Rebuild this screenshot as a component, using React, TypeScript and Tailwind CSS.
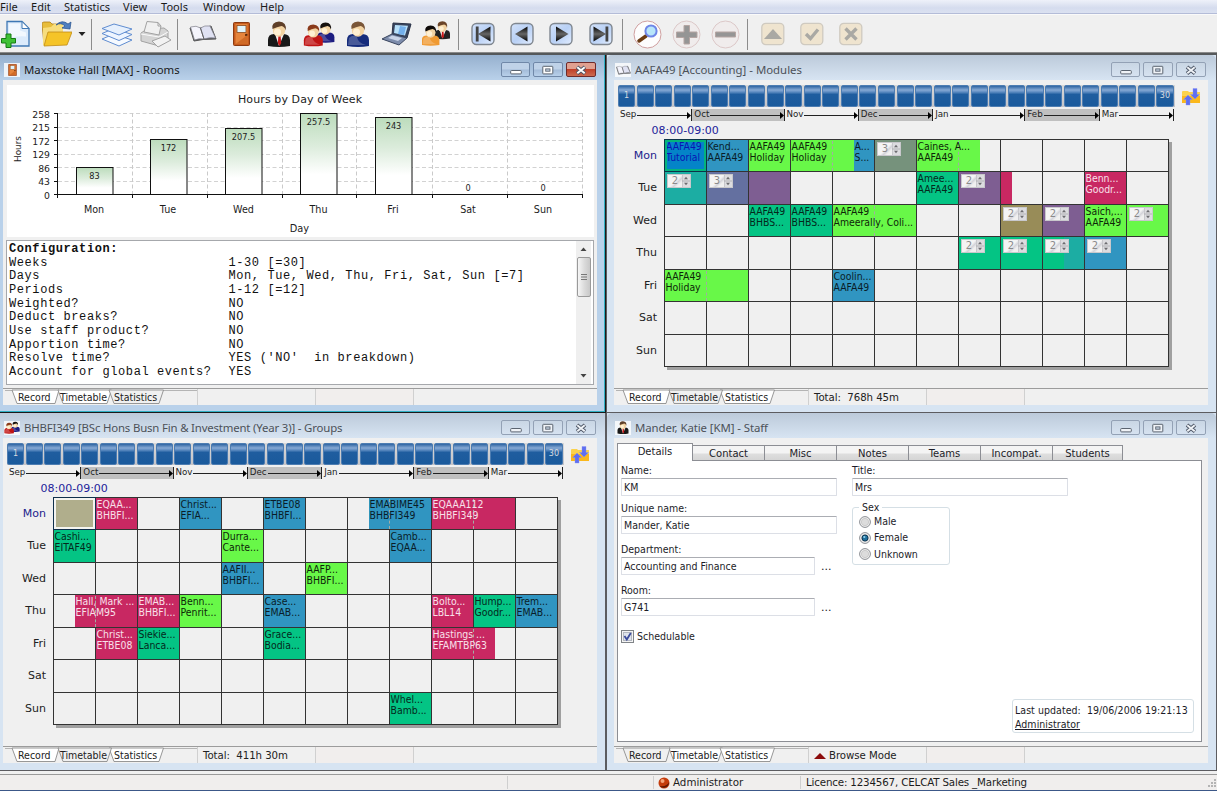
import type { ReactNode } from "react";

const COND = "font-['DejaVu_Sans_Condensed','DejaVu_Sans',sans-serif]";
const WIDE = "font-['DejaVu_Sans',sans-serif]";
const SEGOE = "font-['Noto_Sans','Open_Sans',sans-serif]";

/* ---------- icons ---------- */

function Person({ hair, body, tie, x = 0, y = 0, s = 1 }: { hair: string; body: string; tie?: boolean; x?: number; y?: number; s?: number }) {
  return (
    <g transform={`translate(${x} ${y}) scale(${s})`}>
      <path d="M1 25V19q0-6 6-6h9q7 0 7 6v6q-11 2-22 0z" fill={body} />
      {tie && <path d="M8 13l4 12 5-12z" fill="#f4f4f4" />}
      {tie && <path d="M11.500 14h2l.7 8-1.600 3-1.800-3z" fill="#c81818" />}
      {!tie && <path d="M3 17q4-4 8-1 1 6 9 8H2z" fill="#fff" opacity=".22" />}
      <ellipse cx="12" cy="9" rx="6.200" ry="6.800" fill="#f3d3a2" />
      <ellipse cx="10.500" cy="11" rx="3.500" ry="3.500" fill="#fff0d2" />
      <path d="M5.500 8Q4 1 12 .5q8 .5 6.700 9-1-4-4.200-4.500Q10 6 5.500 8z" fill={hair} />
    </g>
  );
}

function DoorShape() {
  return (
    <g>
      <rect x=".5" y=".5" width="16" height="23" rx="1" fill="#c65a1c" stroke="#8c3a10" />
      <rect x="2.500" y="2" width="12" height="20" fill="#e5843c" />
      <rect x="4" y="3.500" width="9" height="7" fill="#dff3fb" stroke="#8c4a1c" strokeWidth=".8" />
      <circle cx="13.300" cy="13" r="1.300" fill="#5a2808" />
      <path d="M2.500 22l12-9v9z" fill="#d06a26" />
    </g>
  );
}

function BookShape() {
  return (
    <g strokeLinejoin="round">
      <path d="M1 6l4 13 9-1.500 13-.5-5-13-9 2z" fill="#5e6268" stroke="#555" />
      <path d="M1.500 5q6-2 10 1l3.500 11q-5-1-9.500 1z" fill="#f4f4fc" stroke="#7c7c86" strokeWidth=".7" />
      <path d="M11.500 6q4-3 9.500-2l5.500 12q-6-1-11.500 1z" fill="#dfe1f2" stroke="#7c7c86" strokeWidth=".7" />
      <path d="M11.500 6l3.500 11" stroke="#555" strokeWidth=".8" />
    </g>
  );
}

function Groups() {
  return (
    <g>
      <Person hair="#17120f" body="#1c1c80" x={13} y={1} s={0.8} />
      <Person hair="#8a3a1a" body="#c01414" x={0} y={3} s={0.86} />
    </g>
  );
}

function NavButton({ d, bar, className }: { d: string; bar?: number; className: string }) {
  return (
    <svg className={`${className} h-6 w-6`} viewBox="0 0 24 24">
      <defs>
        <linearGradient id="nav" x1="0" y1="0" x2="1" y2="1">
          <stop offset="0" stopColor="#d3e2fa" />
          <stop offset=".5" stopColor="#b8d0f5" />
          <stop offset="1" stopColor="#e2edff" />
        </linearGradient>
        <linearGradient id="arrow" x1="0" y1="0" x2="0" y2="1">
          <stop offset="0" stopColor="#000" />
          <stop offset=".5" stopColor="#666" />
          <stop offset="1" stopColor="#000" />
        </linearGradient>
      </defs>
      <rect x="1" y="1.500" width="22" height="21" rx="4.500" fill="url(#nav)" stroke="#7f868f" strokeWidth="1.400" />
      <path d={d} fill="url(#arrow)" />
      {bar !== undefined && <rect x={bar} y="4.500" width="2.800" height="15" fill="#444" />}
    </svg>
  );
}

function EditButton({ children, className }: { children: ReactNode; className: string }) {
  return (
    <svg className={`${className} h-6 w-6`} viewBox="0 0 24 24">
      <rect x=".8" y="1.300" width="22" height="21.400" rx="4" fill="#efe4cf" stroke="#cfcac0" strokeWidth="1.300" />
      {children}
    </svg>
  );
}

function Sep({ className }: { className: string }) {
  return <div className={`${className} h-[31px] w-px bg-[#8c8c8c]`} />;
}

function Toolbar() {
  return (
    <div className="flex h-[38px] w-full items-center border-t border-[#fafafa] bg-[#f0f0f0] pt-px">
      <svg className="h-7 w-[30px] shrink-0" viewBox="0 0 30 28">
        <path d="M7 1.500h15l7 7V26H7z" fill="#dcebfb" stroke="#3f78b4" strokeWidth="1.300" />
        <path d="M9 3.500h11v7l6 2v4q-9-1-17 2z" fill="#f2f8fe" />
        <path d="M22 1.500v7h7z" fill="#fff" stroke="#3f78b4" />
        <path d="M6 14h5v4.500h4.500v4.500H11v4.500H6V23H1.500v-4.500H6z" fill="#3fc135" stroke="#167a14" />
      </svg>
      <svg className="ml-3 h-7 w-[30px]" viewBox="0 0 30 28">
        <path d="M0 4q0-2 2-2h6l2 2h8v6L2 25z" fill="#e8bd3a" stroke="#b07f18" strokeWidth=".8" />
        <path d="M1 25V8l8-1 3-3h9v10L6 26z" fill="#f7dd7c" />
        <path d="M6 12h24l-5 13-23 1z" fill="#f5c428" stroke="#c08c14" strokeWidth=".8" />
        <path d="M14 5q6-6 12-1l3-2-1 7-8-1 3-2q-4-4-9-1z" fill="#4f7fc0" stroke="#234f8c" strokeWidth=".7" />
      </svg>
      <svg className="ml-[6px] h-2 w-2" viewBox="0 0 8 8"><path d="M.5 2h7L4 6z" fill="#222" /></svg>
      <Sep className="ml-[5px]" />
      <svg className="ml-[10px] h-7 w-[30px]" viewBox="0 0 30 28" strokeLinejoin="round" stroke="#5f8cd0">
        <path d="M0 19l12-5 18 6-13 6z" fill="#f6faff" />
        <path d="M0 13.500l12-5 18 6-13 6z" fill="#eef5ff" />
        <path d="M0 8.500L12 4l18 5-13 6z" fill="#e6f0fd" />
      </svg>
      <svg className="ml-2 h-7 w-8" viewBox="0 0 32 28" stroke="#a2a2a2" strokeLinejoin="round">
        <path d="M1 13l6-4 17-1 4 3v9l-9 6-18-5z" fill="#d4d4d4" />
        <path d="M4 12L7 1.500l11 1L21 6l-2 9z" fill="#f0f0f0" />
        <path d="M18 2.500V6h3" fill="none" />
        <path d="M1 14l18 3 9-5" fill="none" stroke="#fafafa" />
        <path d="M12 21l13-5 6 4-13 7z" fill="#f2f2f2" />
      </svg>
      <Sep className="ml-[5px]" />
      <svg className="ml-[11px] h-6 w-7" viewBox="0 0 28 24"><BookShape /></svg>
      <svg className="ml-4 h-6 w-[17px]" viewBox="0 0 17 24"><DoorShape /></svg>
      <svg className="ml-[17px] h-[26px] w-6" viewBox="0 0 24 26"><Person hair="#5f3f28" body="#181818" tie /></svg>
      <svg className="ml-3 h-[26px] w-8" viewBox="0 0 32 26"><Groups /></svg>
      <svg className="ml-[11px] h-[26px] w-6" viewBox="0 0 24 26"><Person hair="#7a5638" body="#162c7c" /></svg>
      <svg className="ml-[11px] h-[26px] w-[31px]" viewBox="0 0 31 26" strokeLinejoin="round">
        <path d="M12 2l18 1-4 14-15-3z" fill="#39455e" stroke="#2a3348" />
        <path d="M14 4l13 .8-3 9.700L13 12z" fill="#b7e0fa" />
        <path d="M19 5l-2 8 6 1 2-8z" fill="#74b0ec" />
        <path d="M11 13l15 4-8 7L1 18z" fill="#7d8cab" stroke="#39455e" />
        <path d="M11 14.500l10 2.500-4 3-10-3z" fill="#c9d4e8" />
      </svg>
      <svg className="ml-[10px] h-[26px] w-7" viewBox="0 0 28 26">
        <Person hair="#6a4428" body="#222" tie x={12} y={0} s={0.7} />
        <Person hair="#0f0b09" body="#f09a32" x={-1} y={4} s={0.8} />
      </svg>
      <Sep className="ml-2" />
      <NavButton className="ml-3" d="M19.500 4.500v15L7 12z" bar={4.8} />
      <NavButton className="ml-[15px]" d="M17.500 4.500v15L5 12z" />
      <NavButton className="ml-[15px]" d="M7 4.500v15L19.500 12z" />
      <NavButton className="ml-4" d="M4.500 4.500v15L17 12z" bar={16.5} />
      <Sep className="ml-[9px]" />
      <svg className="ml-[10px] h-[29px] w-[29px]" viewBox="0 0 29 29">
        <circle cx="14.500" cy="14.500" r="13.500" fill="#fdfdfd" stroke="#d0a0a0" />
        <path d="M6 21l7-5" stroke="#6b3c14" strokeWidth="3.500" strokeLinecap="round" />
        <circle cx="18" cy="11" r="5.600" fill="#b8e6fa" stroke="#6f86e8" strokeWidth="2" />
      </svg>
      <svg className="ml-[10px] h-[29px] w-[29px]" viewBox="0 0 29 29">
        <circle cx="14.500" cy="14.500" r="13.500" fill="#f0ecec" stroke="#dcc8c8" />
        <path d="M12 5.500h5.500V12H25v5.500h-7.500V24H12v-6.500H4.500V12H12z" fill="#959595" stroke="#b5a5a2" />
      </svg>
      <svg className="ml-[10px] h-[29px] w-[29px]" viewBox="0 0 29 29">
        <circle cx="14.500" cy="14.500" r="13.500" fill="#f0ecec" stroke="#dcc8c8" />
        <path d="M4.500 12h20v5h-20z" fill="#959595" stroke="#b5a5a2" />
      </svg>
      <Sep className="ml-[7px]" />
      <EditButton className="ml-[13px]"><path d="M3 17l9-10 9 10z" fill="#aaa9a4" /></EditButton>
      <EditButton className="ml-[15px]"><path d="M6 12l4.500 4.500L18 7.500" fill="none" stroke="#aaa9a4" strokeWidth="3.400" /></EditButton>
      <EditButton className="ml-[15px]"><path d="M6.500 6.500l11 11m0-11l-11 11" fill="none" stroke="#aaa9a4" strokeWidth="3.400" /></EditButton>
    </div>
  );
}

/* ---------- window frame ---------- */

function CaptionButtons({ active }: { active?: boolean }) {
  const plain = active
    ? "border-[#7088a8] bg-[linear-gradient(#bfd2e8_0_48%,#a3bbd8_52%,#b8d0ea)]"
    : "border-[#93a1b5] bg-[linear-gradient(#c9d6e4,#d6e2f0)]";
  const close = active ? "border-[#6e2a2a] bg-[linear-gradient(#e0a090_0_45%,#c0402a_50%,#cc6a50)]" : plain;
  const ink = active ? "#fff" : "#f0f3f7";
  return (
    <div className="flex gap-[3px]">
      <div className={`flex h-[15px] w-[29px] items-center justify-center rounded-[2px] border ${plain}`}>
        <svg className="h-3 w-3" viewBox="0 0 12 12"><rect x=".7" y="6.500" width="10.600" height="3.400" rx=".8" fill={ink} stroke="#5b6470" /></svg>
      </div>
      <div className={`flex h-[15px] w-[30px] items-center justify-center rounded-[2px] border ${plain}`}>
        <svg className="h-3 w-3" viewBox="0 0 12 12"><rect x=".8" y="2.300" width="10" height="7.600" rx=".6" fill={ink} stroke="#5b6470" /><rect x="3.700" y="4.900" width="4.300" height="2.300" fill="#c2cfdf" stroke="#5b6470" strokeWidth=".9" /></svg>
      </div>
      <div className={`flex h-[15px] w-[30px] items-center justify-center rounded-[2px] border ${close}`}>
        <svg className="h-3 w-3" viewBox="0 0 12 12"><path d="M2 3l8 6.400m0-6.400l-8 6.400" stroke="#4d5666" strokeWidth="3.800" /><path d="M2.300 3.200l7.400 6m0-6l-7.400 6" stroke={ink} strokeWidth="1.900" /></svg>
      </div>
    </div>
  );
}

const tabShapes = [
  "M9 1L14 14.500H52L56 1Z",
  "M55 1L60 14.500H104L108.500 1Z",
  "M106 1L111 14.500H156L160.500 1Z",
];

function BottomBar({ activeTab, children }: { activeTab: number; children?: ReactNode }) {
  return (
    <div className="flex h-[17px] border-t border-[#9c9c9c] bg-[#f0f0f0]">
      <div className="grid w-[194px]">
        <svg className="col-start-1 row-start-1 h-4 w-[194px]" viewBox="0 0 194 16">
          <path d="M2 1.500H194" stroke="#b4b4b4" />
          {tabShapes.map((d, i) => (i === activeTab ? null : <path key={i} d={d} fill="#fff" stroke="#8c8c8c" strokeWidth=".9" />))}
          <path d={tabShapes[activeTab]} fill="#f0f0f0" stroke="#8c8c8c" strokeWidth=".9" />
        </svg>
        <div className={`${COND} col-start-1 row-start-1 flex pt-px pl-[15px] text-[10.5px] leading-[15px] text-[#222]`}>
          <span className="w-[42px]">Record</span>
          <span className="w-[54px]">Timetable</span>
          <span>Statistics</span>
        </div>
      </div>
      <div className={`${WIDE} flex w-[118px] items-center border-l border-[#d0d0d0] pt-px pl-[5px] text-[10.200px] tracking-[-0.05px] whitespace-pre text-[#222]`}>{children}</div>
      <div className="w-[98px] border-l border-[#d0d0d0] bg-[#f1eeed]" />
      <div className="flex-1 border-l border-[#d0d0d0]" />
    </div>
  );
}

function Win({ title, icon, active, side, activeTab, status, tracking = "", children }: {
  title: string; icon: ReactNode; active?: boolean; side: "left" | "right"; activeTab: number; status?: ReactNode; tracking?: string; children: ReactNode;
}) {
  const frame = active ? "bg-[#b9d1ea] border-[#1a1a1a] shadow-[inset_-1px_0_#2fb0c4]" : "bg-[#d7e4f2] border-[#5c5c60]";
  const bar = active ? "mr-px bg-[linear-gradient(#96b0ce,#b9d1ea)]" : "bg-[linear-gradient(#bccada,#d7e4f2)]";
  return (
    <section className={`flex h-[358px] min-w-0 flex-col border-r border-b ${frame} ${side === "left" ? "" : "border-l"}`}>
      <header className={`flex h-[25px] shrink-0 items-center pt-[4px] ${bar} ${side === "left" ? (active ? "pr-2 pl-1" : "pr-[9px] pl-1") : "rounded-t-[5px] pr-[10px] pl-2"}`}>
        <span className="flex h-[14px] w-4 items-center justify-center bg-white/80">{icon}</span>
        <h2 className={`${SEGOE} ml-1 flex-1 text-[11.4px] leading-4 ${tracking} ${active ? "text-[#1a1a1a]" : "text-[#4c5158]"}`}>{title}</h2>
        <CaptionButtons active={active} />
      </header>
      <div className={`flex min-h-0 flex-1 flex-col ${side === "left" ? "mr-2 ml-[3px]" : "mr-2 ml-[7px]"}`}>
        <div className="flex min-h-0 flex-1 flex-col bg-[#f0f0f0]">{children}</div>
        <BottomBar activeTab={activeTab}>{status}</BottomBar>
      </div>
      <div className={`h-[7px] shrink-0 ${active ? "border-b border-[#2fb0c4]" : ""}`} />
    </section>
  );
}

/* ---------- statistics window ---------- */

const bars = [
  { day: "Mon", value: "83", x: 76.5, top: 167.5, cx: 94 },
  { day: "Tue", value: "172", x: 150.5, top: 139.5, cx: 168 },
  { day: "Wed", value: "207.5", x: 225.5, top: 128.5, cx: 243.5 },
  { day: "Thu", value: "257.5", x: 300.5, top: 113.5, cx: 318.5 },
  { day: "Fri", value: "243", x: 375.5, top: 117.5, cx: 393 },
  { day: "Sat", value: "0", x: 450.5, top: 194.5, cx: 468 },
  { day: "Sun", value: "0", x: 525.5, top: 194.5, cx: 543 },
];
const scale = [258, 215, 172, 129, 86, 43, 0];
const ticks = [57.5, 132.5, 207.5, 282.5, 356.5, 432.5, 507.5, 582.5];

function HoursChart() {
  return (
    <svg className={`${WIDE} ml-1 block h-[152px] w-[587px] bg-white`} viewBox="7 85 587 152" fill="#1c1c1c">
      <defs>
        <linearGradient id="bar" x1="0" y1="0" x2="0" y2="1">
          <stop offset="0" stopColor="#bcdcbc" />
          <stop offset=".4" stopColor="#dcecdc" />
          <stop offset=".75" stopColor="#fff" />
        </linearGradient>
      </defs>
      <text x="238" y="102.500" fontSize="11" textLength="124">Hours by Day of Week</text>
      {scale.map((v, i) => {
        const y = 113.5 + i * 13.5;
        return (
          <g key={v}>
            {v > 0 && <path d={`M58 ${Math.round(y - 0.5) + 0.5}H582`} stroke="#d2d2d2" strokeDasharray="4 2.500" />}
            <path d={`M54 ${Math.round(y - 0.5) + 0.5}H58`} stroke="#111" />
            <text x="50" y={y + 4} fontSize="9.300" textAnchor="end">{v}</text>
          </g>
        );
      })}
      {ticks.map((x, i) => (
        <g key={x}>
          {i > 0 && <path d={`M${x} 113V194`} stroke="#cacaca" strokeDasharray="4 2.500" />}
          <path d={`M${x} 194V198`} stroke="#111" />
        </g>
      ))}
      {bars.map((b) => (
        <g key={b.day}>
          {b.value !== "0" && <rect x={b.x} y={b.top} width="36.500" height={194.5 - b.top} fill="url(#bar)" stroke="#111" />}
          <text x={b.value === "0" ? b.cx : b.x + 18} y={b.value === "0" ? 191 : b.top + 11} fontSize="8.200" textAnchor="middle">{b.value}</text>
          <text x={b.cx} y="213" fontSize="9.600" textAnchor="middle">{b.day}</text>
        </g>
      ))}
      <path d="M57.500 113V194.500H583" fill="none" stroke="#111" />
      <text x="299.500" y="232" fontSize="9.800" textAnchor="middle">Day</text>
      <text transform="translate(21 149) rotate(-90)" fontSize="8.800" textAnchor="middle">Hours</text>
    </svg>
  );
}

const config: [string, string][] = [
  ["Weeks", "1-30 [=30]"],
  ["Days", "Mon, Tue, Wed, Thu, Fri, Sat, Sun [=7]"],
  ["Periods", "1-12 [=12]"],
  ["Weighted?", "NO"],
  ["Deduct breaks?", "NO"],
  ["Use staff product?", "NO"],
  ["Apportion time?", "NO"],
  ["Resolve time?", "YES ('NO'  in breakdown)"],
  ["Account for global events?", "YES"],
];

function Report() {
  return (
    <div className="mt-[3px] ml-[3px] flex h-[145px] w-[588px] border border-[#a6a8ac] bg-white">
      <div className="flex-1 pt-[2px] pl-[2px] font-['Liberation_Mono',monospace] text-[12px] leading-[13.65px] tracking-[0.59px] text-[#111]">
        <div className="font-bold">Configuration:</div>
        {config.map(([k, v]) => (
          <div key={k} className="flex whitespace-pre"><span className="w-[219.5px]">{k}</span><span>{v}</span></div>
        ))}
      </div>
      <div className="mr-[2px] flex w-[15px] flex-col items-center bg-[#efefef]">
        <svg className="h-4 w-[15px]" viewBox="0 0 15 16"><path d="M4.500 10h6l-3-3.500z" fill="#444" /></svg>
        <div className="flex h-[40px] w-[14px] items-center justify-center rounded-[2px] border border-[#9a9a9a] bg-[linear-gradient(90deg,#f6f6f6,#dcdcdc_50%,#c8c8c8)]">
          <svg className="h-2 w-[6px]" viewBox="0 0 6 8"><path d="M0 1.500h6M0 4h6M0 6.500h6" stroke="#777" /></svg>
        </div>
        <div className="flex-1" />
        <svg className="h-4 w-[15px]" viewBox="0 0 15 16"><path d="M4.500 6h6l-3 3.500z" fill="#444" /></svg>
      </div>
    </div>
  );
}

/* ---------- timetable windows ---------- */

const colours = {
  blue: "bg-[#3095c1] text-[#0a1c28]",
  green: "bg-[#68f848] text-[#0e2608]",
  emerald: "bg-[#04c484] text-[#04281c]",
  pink: "bg-[#c82862] text-[#f8e0ea]",
  teal: "bg-[#1cada3]",
  slate: "bg-[#6470a0]",
  purple: "bg-[#7e5e92]",
  sage: "bg-[#76927c]",
  olive: "bg-[#988c58]",
  split: "bg-[linear-gradient(90deg,#04c484_50%,#1cada3_50%)]",
  picked: "bg-[#0484c8] text-[#0a14b4] border-2 border-[#04b47c] outline outline-[1.5px] outline-[#0c3348]",
  empty: "bg-[#b0ae8c] border-2 border-[#f4f4f0] outline outline-[1.5px] outline-[#10304c]",
};
type Colour = keyof typeof colours;
/* row, start and end in quarter-hours, colour, text lines, clash count, hour mark */
type Slot = { r: number; a: number; b: number; c: Colour; t?: [string, string]; n?: number; dash?: number };

const moduleSlots: Slot[] = [
  { r: 0, a: 4, b: 8, c: "blue", t: ["Kend...", "AAFA49"] },
  { r: 0, a: 8, b: 12, c: "green", t: ["AAFA49", "Holiday"] },
  { r: 0, a: 12, b: 18, c: "green", t: ["AAFA49", "Holiday"], dash: 16 },
  { r: 0, a: 18, b: 20, c: "blue", t: ["A...", "S..."] },
  { r: 0, a: 20, b: 24, c: "sage", n: 3 },
  { r: 0, a: 24, b: 30, c: "green", t: ["Caines, A...", "AAFA49"], dash: 28 },
  { r: 1, a: 0, b: 4, c: "teal", n: 2 },
  { r: 1, a: 4, b: 8, c: "slate", n: 3 },
  { r: 1, a: 8, b: 12, c: "purple" },
  { r: 1, a: 24, b: 28, c: "emerald", t: ["Amee...", "AAFA49"] },
  { r: 1, a: 28, b: 32, c: "purple", n: 2 },
  { r: 1, a: 32, b: 33, c: "pink" },
  { r: 1, a: 40, b: 44, c: "pink", t: ["Benn...", "Goodr..."] },
  { r: 2, a: 8, b: 12, c: "emerald", t: ["AAFA49", "BHBS..."] },
  { r: 2, a: 12, b: 16, c: "emerald", t: ["AAFA49", "BHBS..."] },
  { r: 2, a: 16, b: 24, c: "green", t: ["AAFA49", "Ameerally, Coli..."], dash: 20 },
  { r: 2, a: 32, b: 36, c: "olive", n: 2 },
  { r: 2, a: 36, b: 40, c: "purple", n: 2 },
  { r: 2, a: 40, b: 44, c: "green", t: ["Saich,...", "AAFA49"] },
  { r: 2, a: 44, b: 48, c: "green", n: 2 },
  { r: 3, a: 28, b: 32, c: "emerald", n: 2 },
  { r: 3, a: 32, b: 36, c: "emerald", n: 2 },
  { r: 3, a: 36, b: 40, c: "split", n: 2 },
  { r: 3, a: 40, b: 44, c: "blue", n: 2 },
  { r: 4, a: 0, b: 8, c: "green", t: ["AAFA49", "Holiday"], dash: 4 },
  { r: 4, a: 16, b: 20, c: "blue", t: ["Coolin...", "AAFA49"] },
  { r: 0, a: 0, b: 4, c: "picked", t: ["AAFA49", "Tutorial"] },
];

const groupSlots: Slot[] = [
  { r: 0, a: 4, b: 8, c: "pink", t: ["EQAA...", "BHBFI..."] },
  { r: 0, a: 12, b: 16, c: "blue", t: ["Christ...", "EFIA..."] },
  { r: 0, a: 20, b: 24, c: "blue", t: ["ETBE08", "BHBFI..."] },
  { r: 0, a: 30, b: 36, c: "blue", t: ["EMABIME45", "BHBFI349"], dash: 32 },
  { r: 0, a: 36, b: 44, c: "pink", t: ["EQAAA112", "BHBFI349"], dash: 40 },
  { r: 1, a: 0, b: 4, c: "emerald", t: ["Cashi...", "EITAF49"] },
  { r: 1, a: 16, b: 20, c: "green", t: ["Durra...", "Cante..."] },
  { r: 1, a: 32, b: 36, c: "blue", t: ["Camb...", "EQAA..."] },
  { r: 2, a: 16, b: 20, c: "blue", t: ["AAFII...", "BHBFI..."] },
  { r: 2, a: 24, b: 28, c: "green", t: ["AAFP...", "BHBFI..."] },
  { r: 3, a: 2, b: 8, c: "pink", t: ["Hall, Mark ...", "EFIAM95"], dash: 4 },
  { r: 3, a: 8, b: 12, c: "pink", t: ["EMAB...", "BHBFI..."] },
  { r: 3, a: 12, b: 16, c: "green", t: ["Benn...", "Penrit..."] },
  { r: 3, a: 20, b: 24, c: "blue", t: ["Case...", "EMAB..."] },
  { r: 3, a: 36, b: 40, c: "pink", t: ["Bolto...", "LBL14"] },
  { r: 3, a: 40, b: 44, c: "emerald", t: ["Hump...", "Goodr..."] },
  { r: 3, a: 44, b: 48, c: "blue", t: ["Trem...", "EMAB..."] },
  { r: 4, a: 4, b: 8, c: "pink", t: ["Christ...", "ETBE08"] },
  { r: 4, a: 8, b: 12, c: "emerald", t: ["Siekie...", "Lanca..."] },
  { r: 4, a: 20, b: 24, c: "emerald", t: ["Grace...", "Bodia..."] },
  { r: 4, a: 36, b: 42, c: "pink", t: ["Hastings ...", "EFAMTBP63"], dash: 40 },
  { r: 6, a: 32, b: 36, c: "emerald", t: ["Whel...", "Bamb..."] },
  { r: 0, a: 0, b: 4, c: "empty" },
];

const months = [
  ["Sep", 4], ["Oct", 5], ["Nov", 4], ["Dec", 4], ["Jan", 5], ["Feb", 4], ["Mar", 4],
] as const;
const days = ["Mon", "Tue", "Wed", "Thu", "Fri", "Sat", "Sun"];

function Spinner({ n }: { n: number }) {
  return (
    <div className="mt-[2px] ml-[2px] flex h-[14px] w-6 border border-[#c8c8cc] bg-[linear-gradient(135deg,#f4f4f4_40%,#d4d4da_50%,#f0f0f0_60%)]">
      <span className={`${WIDE} w-[14px] text-center text-[10px] leading-3 text-[#8a8a8a]`}>{n}</span>
      <svg className="h-3 w-2 bg-[#dcdcdf]" viewBox="0 0 8 12"><path d="M0 0v12M0 6h8" stroke="#a8a8ac" strokeWidth=".8" /><path d="M2 4.300h4L4 1.800zM2 7.700h4L4 10.200z" fill="#6c6c70" /></svg>
    </div>
  );
}

function Timetable({ slots }: { slots: Slot[] }) {
  return (
    <div className="pt-[5px] pl-1">
      <div className="flex h-[22px]">
        <div className="grid w-[557px] grid-cols-[repeat(30,minmax(0,1fr))] bg-[linear-gradient(#d8d8d8,#c4c4c8)]">
          {Array.from({ length: 30 }, (_, i) => (
            <div key={i} className={`${WIDE} mr-[1.5px] rounded-[2px] border border-[#4d7db2] bg-[linear-gradient(#2e64a2_0,#86a9d4_20%,#5e8cc2_30%,#1f5d9f_42%,#1a5a9c)] text-center text-[8px] leading-[20px] text-[#d8dce0]`}>
              {i === 0 ? "1" : i === 29 ? "30" : ""}
            </div>
          ))}
        </div>
        <svg className="mt-[3px] ml-[7px] h-[18px] w-[18px]" viewBox="0 0 18 18">
          <path d="M0 4q0-1 1-1h5l1 1h11v10H0z" fill="#fbd24c" />
          <path d="M0 8h18v7H0z" fill="#fbb81c" />
          <path d="M6 7l4.500 4.500H8V17H4v-5.500H1.500zM13 11l4.500-4.500H15V.5h-4v6H8.500z" fill="#5f6ff0" stroke="#8b94f4" strokeWidth=".4" />
        </svg>
      </div>
      <div className={`${WIDE} mt-[2px] flex h-[12px] w-[556px] text-[8.7px] leading-[11px] text-[#222]`}>
        {months.map(([m, weeks], i) => (
          <div key={m} style={{ flexGrow: weeks, flexBasis: 0 }} className={`flex items-center border-r-[1.5px] border-[#222] pl-[2px] ${i % 2 ? "bg-[#c0c0c0]" : ""}`}>
            <span className="-mt-[2px]">{m}</span>
            <span className="ml-px h-px flex-1 bg-[#222]" />
            <svg className="h-[7px] w-1" viewBox="0 0 4 7"><path d="M0 0l4 3.500L0 7z" fill="#000" /></svg>
          </div>
        ))}
      </div>
      <div className={`${WIDE} mt-[2px] mb-px pl-[33.500px] text-[11px] leading-[15px] text-[#22229a]`}>08:00-09:00</div>
      <div className="flex h-[228px]">
        <div className={`${WIDE} grid w-[46px] grid-rows-7 pt-px pr-[7px] text-right text-[11px] text-[#222]`}>
          {days.map((d, i) => (
            <span key={d} className={`self-center ${i === 0 ? "text-[#22228c]" : ""}`}>{d}</span>
          ))}
        </div>
        <div className={`${COND} grid w-[505px] grid-cols-[repeat(48,minmax(0,1fr))] grid-rows-[repeat(7,minmax(0,1fr))] border-t border-l border-[#333] bg-[#f0f0f0] text-[10.4px] leading-[11px] shadow-[3px_3px_0_#a0a0a0]`}>
          {Array.from({ length: 84 }, (_, i) => {
            const col = (i % 12) * 4 + 1;
            const row = Math.floor(i / 12) + 1;
            return <div key={i} style={{ gridColumn: `${col} / ${col + 4}`, gridRow: row }} className="border-r border-b border-[#333]" />;
          })}
          {slots.map((s) => (
            <div
              key={`${s.r}-${s.a}`}
              style={{ gridColumn: `${s.a + 1} / ${s.b + 1}`, gridRow: s.r + 1 }}
              className={`relative overflow-hidden whitespace-nowrap ${s.b % 4 ? "mr-0" : "mr-px"} mb-px ${colours[s.c]}`}
            >
              {s.dash !== undefined && (
                <span style={{ left: (s.dash - s.a) * 10.5 - 1 }} className="absolute top-px bottom-0 border-l border-dashed border-[#a4aca4]" />
              )}
              {s.t && <div className={s.c === "picked" ? "-mt-px -ml-px" : "relative mt-px ml-[0.5px]"}>{s.t[0]}<br />{s.t[1]}</div>}
              {s.n && <Spinner n={s.n} />}
            </div>
          ))}
        </div>
      </div>
    </div>
  );
}

/* ---------- staff window ---------- */

function Field({ label, value, lookup }: { label: string; value: string; lookup?: boolean }) {
  return (
    <div>
      <div className="leading-[14px]">{label}</div>
      <div className="flex">
        <div className={`mt-px h-[18px] rounded-[1px] border border-[#dcdfe6] border-t-[#abadb3] bg-white pl-[2px] leading-4 ${lookup ? "w-[194px]" : "w-[216px]"}`}>{value}</div>
        {lookup && <span className={`${WIDE} ml-[6px] self-end text-[11px] leading-4`}>...</span>}
      </div>
    </div>
  );
}

function Radio({ label, on }: { label: string; on?: boolean }) {
  return (
    <div className="flex h-[16.2px] items-center gap-[3px]">
      <svg className="h-3 w-3" viewBox="0 0 12 12">
        <circle cx="6" cy="6" r="5.400" fill="#f4f4f4" stroke="#8a8d92" />
        <circle cx="6" cy="6" r="3.700" fill="#dcdcdc" stroke="#bbb" strokeWidth=".6" />
        {on && <circle cx="6" cy="6" r="3" fill="#1f6f9c" stroke="#0c3a58" />}
        {on && <circle cx="5.300" cy="5" r="1.100" fill="#8fd4f0" />}
      </svg>
      {label}
    </div>
  );
}

function StaffForm() {
  return (
    <div className={`${COND} mt-[5px] mr-[6px] ml-[3px] flex h-[299px] flex-col text-[10.5px] text-[#1c1c28]`}>
      <div className={`${WIDE} flex h-[18px] items-end text-center text-[10px]`}>
        <div className="relative z-10 h-[18px] w-[76px] border border-b-0 border-[#8c8e94] bg-white leading-4">Details</div>
        {["Contact", "Misc", "Notes", "Teams", "Incompat.", "Students"].map((t) => (
          <div key={t} className="h-4 w-[72px] border-t border-r border-[#8c8e94] bg-[linear-gradient(#f4f4f4_45%,#dedede_55%,#d4d4d4)] leading-[15px] last:w-[70px]">{t}</div>
        ))}
      </div>
      <div className="-mt-px flex flex-1 flex-col border border-[#8c8e94] bg-white pt-[2px] pl-[3px]">
        <div className="flex">
          <div className="w-[231px]">
            <Field label="Name:" value="KM" />
            <div className="h-[4.500px]" />
            <Field label="Unique name:" value="Mander, Katie" />
            <div className="h-[8px]" />
            <Field label="Department:" value="Accounting and Finance" lookup />
            <div className="h-[8px]" />
            <Field label="Room:" value="G741" lookup />
            <div className="mt-[13px] flex items-center gap-[3px]">
              <svg className="h-[13px] w-[13px]" viewBox="0 0 13 13">
                <rect x=".5" y=".5" width="12" height="12" fill="#f4f4f4" stroke="#808488" />
                <rect x="2.500" y="2.500" width="8" height="8" fill="#dfe4ec" stroke="#b4b8c0" />
                <path d="M3.500 6l2.300 3.500L9.800 3" fill="none" stroke="#3c4c9c" strokeWidth="1.800" />
              </svg>
              Schedulable
            </div>
          </div>
          <div>
            <Field label="Title:" value="Mrs" />
            <fieldset className="mt-[4px] h-[65px] w-[98px] rounded-[3px] border border-[#d5dfe5] pl-[6px]">
              <legend className="px-[3px] leading-[14px]">Sex</legend>
              <div>
                <Radio label="Male" />
                <Radio label="Female" on />
                <Radio label="Unknown" />
              </div>
            </fieldset>
          </div>
        </div>
        <div className="mt-auto mr-[7px] mb-2 h-[34px] w-[182px] self-end rounded-[3px] border border-[#d5dfe5] pt-1 pl-[2px] leading-[13.5px] tracking-[0.05px] whitespace-pre">
          <div>Last updated:  19/06/2006 19:21:13</div>
          <div className="underline">Administrator</div>
        </div>
      </div>
    </div>
  );
}

/* ---------- application ---------- */

const menu = [
  ["File", "w-[31px]"], ["Edit", "w-[33px]"], ["Statistics", "w-[59px]"], ["View", "w-[38px]"],
  ["Tools", "w-[42px]"], ["Window", "w-[57px]"], ["Help", "w-[40px]"],
];

export default function App() {
  return (
    <div className="flex h-[791px] w-[1217px] flex-col overflow-hidden bg-[#f0f0f0]">
      <nav className={`${SEGOE} flex h-[14px] shrink-0 border-b border-[#b4bcd8] bg-[linear-gradient(#eef1f9,#d5dcee_60%,#dbe1f1)] text-[11px] leading-[13px] tracking-[0.05px] text-[#1a1a1a]`}>
        {menu.map(([m, w]) => <span key={m} className={w}>{m}</span>)}
      </nav>
      <Toolbar />
      <div className="h-[3px] shrink-0 border-t border-[#8a8a8a] bg-[#55585a]" />
      <main className="grid grid-cols-[606px_611px] grid-rows-[358px_358px] bg-[#8a8c90]">
        <Win title="Maxstoke Hall [MAX] - Rooms" active side="left" activeTab={2} tracking="tracking-[-0.04px]" icon={<svg className="h-3 w-[9px]" viewBox="0 0 17 24"><DoorShape /></svg>}>
          <div className="pt-[5px]">
            <HoursChart />
            <Report />
          </div>
        </Win>
        <Win title="AAFA49 [Accounting] - Modules" side="right" activeTab={1} status="Total:  768h 45m" icon={<svg className="h-3 w-[15px]" viewBox="0 0 28 22"><BookShape /></svg>}>
          <Timetable slots={moduleSlots} />
        </Win>
        <Win title="BHBFI349 [BSc Hons Busn Fin & Investment (Year 3)] - Groups" side="left" activeTab={1} tracking="tracking-[-0.17px]" status="Total:  411h 30m" icon={<svg className="h-[13px] w-4" viewBox="0 0 32 26"><Groups /></svg>}>
          <Timetable slots={groupSlots} />
        </Win>
        <Win
          title="Mander, Katie [KM] - Staff"
          side="right"
          activeTab={0}
          tracking="tracking-[-0.08px]"
          status={<><svg className="mr-[3px] h-2 w-3" viewBox="0 0 12 8"><path d="M0 7h12L6 1z" fill="#8c0c0c" /></svg>Browse Mode</>}
          icon={<svg className="h-[13px] w-3" viewBox="0 0 24 26"><Person hair="#5f3f28" body="#181818" tie /></svg>}
        >
          <StaffForm />
        </Win>
      </main>
      <footer className={`${WIDE} mt-[3px] flex flex-1 items-center border-t border-b border-t-[#9a9a9a] border-b-[#3c5888] bg-[#f0eeed] text-[10.3px] text-[#1c1c1c]`}>
        <div className="h-[13px] w-[507px]" />
        <div className="h-[13px] w-[146px] border-l border-[#cfcfcf]" />
        <div className="flex h-[13px] w-[147px] items-center gap-[3px] border-l border-[#cfcfcf] pl-1">
          <svg className="h-3 w-3" viewBox="0 0 12 12"><circle cx="6" cy="6" r="5.500" fill="#c43c0c" /><circle cx="4.500" cy="4" r="2" fill="#f4a47c" /><path d="M1.500 9a5.500 5.500 0 0 0 9.500-4q-2 5-9.500 4z" fill="#601804" /></svg>
          Administrator
        </div>
        <div className="flex h-[13px] flex-1 items-center border-l border-[#cfcfcf] pl-[5px] tracking-[-0.17px]">Licence: 1234567, CELCAT Sales _Marketing</div>
        <svg className="h-3 w-3 self-end" viewBox="0 0 12 12" fill="#b4b4b4"><path d="M9 1h2v2H9zM6 4h2v2H6zM9 4h2v2H9zM3 7h2v2H3zM6 7h2v2H6zM9 7h2v2H9z" /></svg>
      </footer>
    </div>
  );
}
